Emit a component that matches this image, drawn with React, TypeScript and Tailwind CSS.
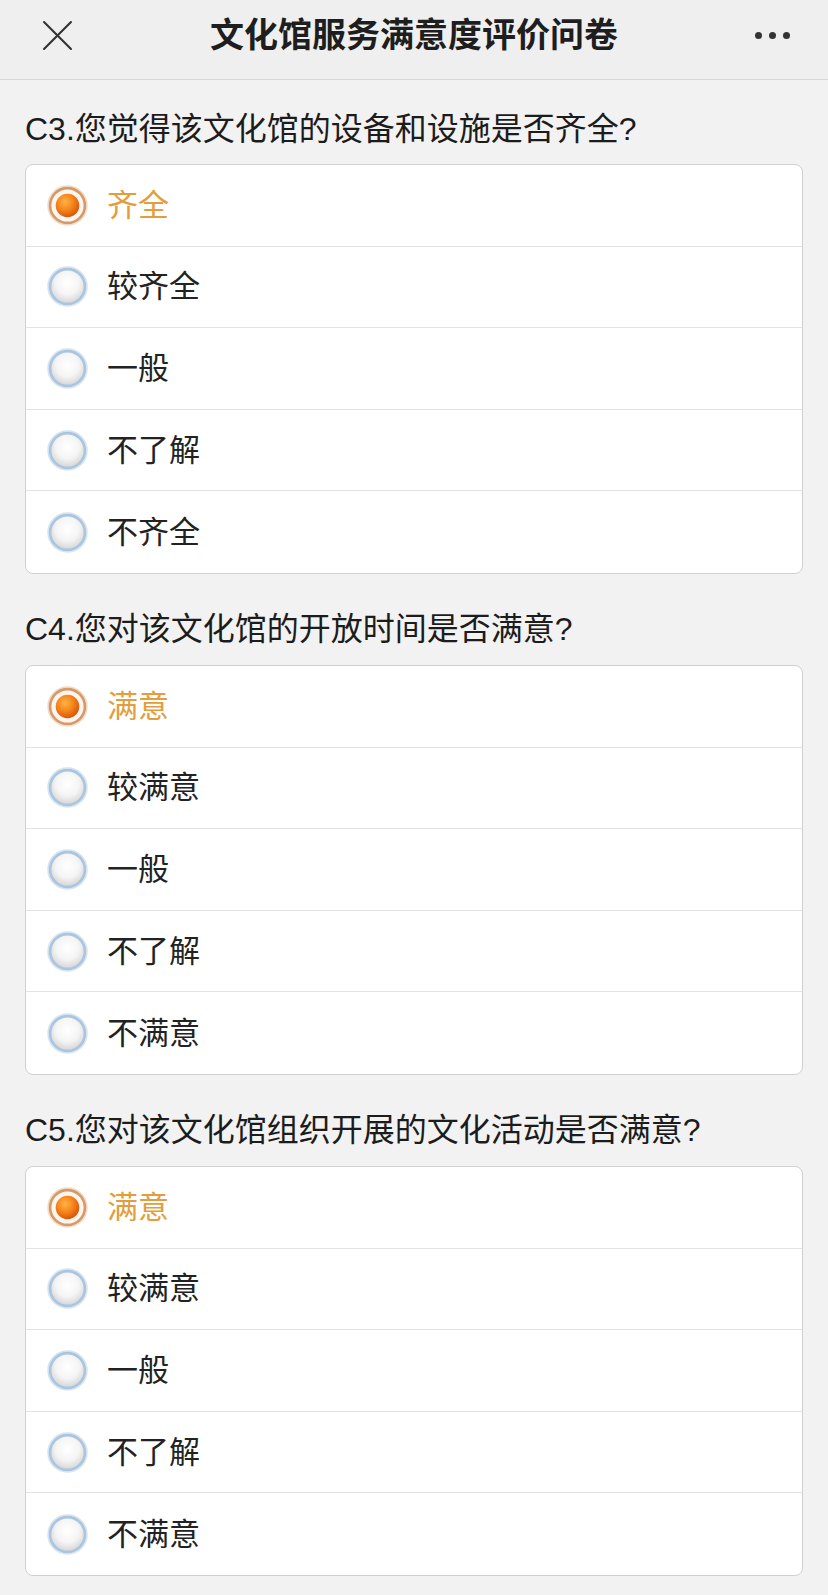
import { useId } from "react";

interface Question {
  title: string;
  options: string[];
  selected: number;
}

const questions: Question[] = [
  {
    title: "C3.您觉得该文化馆的设备和设施是否齐全?",
    options: ["齐全", "较齐全", "一般", "不了解", "不齐全"],
    selected: 0,
  },
  {
    title: "C4.您对该文化馆的开放时间是否满意?",
    options: ["满意", "较满意", "一般", "不了解", "不满意"],
    selected: 0,
  },
  {
    title: "C5.您对该文化馆组织开展的文化活动是否满意?",
    options: ["满意", "较满意", "一般", "不了解", "不满意"],
    selected: 0,
  },
];

const font = {
  fontFamily: '"Liberation Sans", "Noto Sans CJK SC", sans-serif',
};

function Radio({ checked }: { checked: boolean }) {
  const id = useId();
  if (checked) {
    return (
      <svg width="41" height="41" viewBox="0 0 40 40" className="shrink-0">
        <defs>
          <radialGradient id={`${id}-dot`} cx="40%" cy="35%" r="65%">
            <stop offset="0%" stopColor="#ffb347" />
            <stop offset="55%" stopColor="#f5841a" />
            <stop offset="100%" stopColor="#d9570b" />
          </radialGradient>
        </defs>
        <circle cx="20" cy="20" r="19" fill="none" stroke="#f2ddca" strokeWidth="1.5" />
        <circle cx="20" cy="20" r="17" fill="#fbf5ef" stroke="#d69a68" strokeWidth="2.6" />
        <circle cx="20" cy="20" r="11.5" fill={`url(#${id}-dot)`} />
      </svg>
    );
  }
  return (
    <svg width="41" height="41" viewBox="0 0 40 40" className="shrink-0">
      <defs>
        <radialGradient id={`${id}-in`} cx="50%" cy="40%" r="60%">
          <stop offset="0%" stopColor="#ffffff" />
          <stop offset="55%" stopColor="#f5f5f5" />
          <stop offset="100%" stopColor="#d4d4d4" />
        </radialGradient>
      </defs>
      <circle cx="20" cy="20" r="19" fill="none" stroke="#d6e4f1" strokeWidth="1.5" />
      <circle cx="20" cy="20" r="17" fill={`url(#${id}-in)`} stroke="#a9c5df" strokeWidth="2.6" />
    </svg>
  );
}

function QuestionBlock({ q, first }: { q: Question; first: boolean }) {
  return (
    <section>
      <h2
        className={`${first ? "pt-[29px] mb-[15px]" : "pt-[35px] mb-[16px]"} px-[25px] text-[32px] leading-[40px] font-normal text-[#1c1c1c]`}
      >
        {q.title}
      </h2>
      <div className="mx-[25px] overflow-hidden rounded-[8px] border border-[#d0d0d0] bg-white divide-y divide-[#e3e3e3]">
        {q.options.map((opt, i) => (
          <label key={opt + i} className="flex h-[81.6px] items-center pl-[21px]">
            <Radio checked={i === q.selected} />
            <span
              className={`ml-[19px] text-[31px] leading-none ${
                i === q.selected ? "text-[#e39d3c]" : "text-[#222222]"
              }`}
            >
              {opt}
            </span>
          </label>
        ))}
      </div>
    </section>
  );
}

export default function App() {
  return (
    <div className="min-h-screen bg-[#f2f2f2] pb-[19px]" style={font}>
      <header className="grid h-[80px] grid-cols-[110px_1fr_110px] items-center border-b border-[#d8d8d8] bg-[#efefef] pb-[8px]">
        <div className="pl-[42px]">
          <svg width="31" height="31" viewBox="0 0 31 31">
            <path d="M2 2 L29 29 M29 2 L2 29" stroke="#333333" strokeWidth="2.1" strokeLinecap="round" />
          </svg>
        </div>
        <h1 className="text-center text-[34px] font-semibold text-[#1e1e1e]">文化馆服务满意度评价问卷</h1>
        <div className="flex justify-end gap-[7px] pr-[38px]">
          <span className="h-[7px] w-[7px] rounded-full bg-[#333333]" />
          <span className="h-[7px] w-[7px] rounded-full bg-[#333333]" />
          <span className="h-[7px] w-[7px] rounded-full bg-[#333333]" />
        </div>
      </header>
      {questions.map((q, i) => (
        <QuestionBlock key={q.title} q={q} first={i === 0} />
      ))}
    </div>
  );
}
